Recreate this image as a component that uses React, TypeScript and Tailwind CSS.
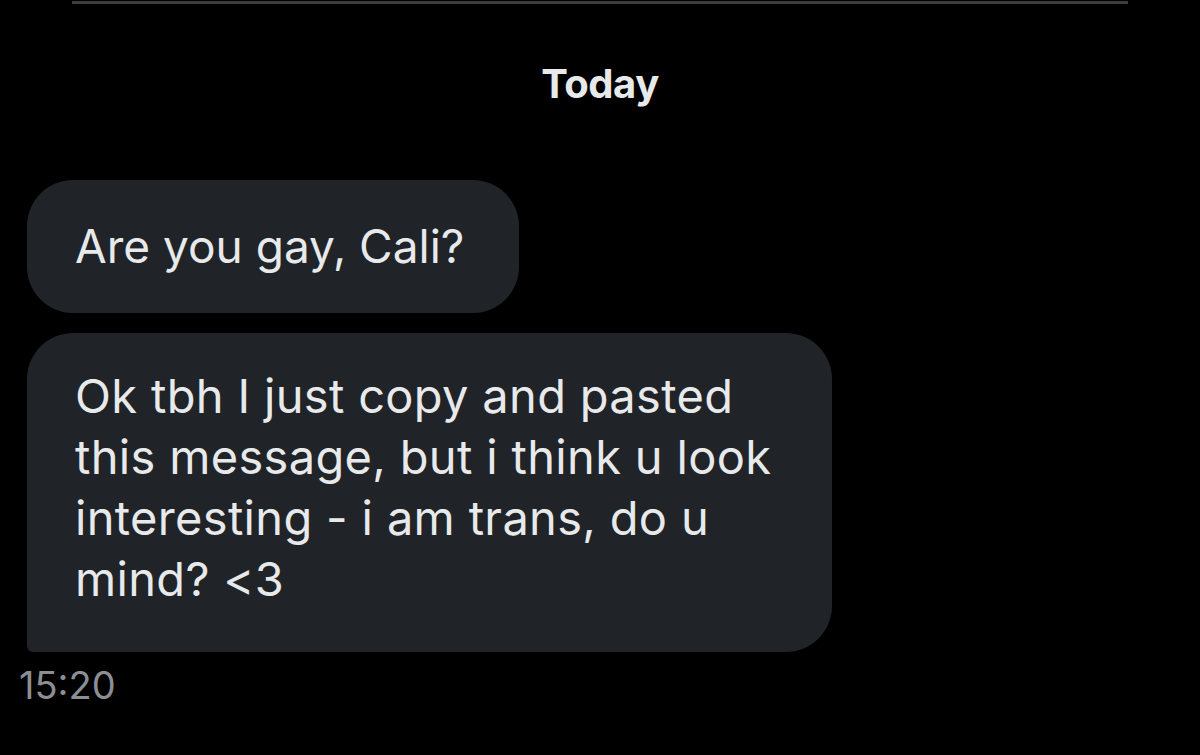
import React from 'react';

const lines = [
  'Ok tbh I just copy and pasted',
  'this message, but i think u look',
  'interesting - i am trans, do u',
  'mind? <3',
];

export default function App() {
  return (
    <div
      className="w-full h-[755px] bg-black overflow-hidden text-[#e7e9ea]"
      style={{ fontFamily: 'Inter, "Liberation Sans", sans-serif' }}
    >
      <div className="ml-[72px] mt-[1px] w-[1056px] h-[3px] bg-[#3d3d3d]" />

      <div className="mt-[56px] text-center text-[40px] font-bold leading-[48px] tracking-[-0.5px]">Today</div>

      <div className="mt-[72px] pl-[27px] flex flex-col items-start gap-[20px]">
        <div className="h-[133px] flex items-center pl-[48px] pr-[55px] rounded-[46px] bg-[#202327] text-[46px] leading-[61px]">
          Are you gay, Cali?
        </div>

        <div className="w-[805px] pl-[48px] pt-[32px] pb-[43px] rounded-[46px] rounded-bl-[6px] bg-[#202327] text-[47px] leading-[61px] tracking-[0.33px]">
          {lines.map((l) => (
            <div key={l} className="whitespace-pre">{l}</div>
          ))}
        </div>
      </div>

      <div className="mt-[11px] pl-[19px] text-[38px] leading-[44px] text-[#8b8f94]">15:20</div>
    </div>
  );
}
